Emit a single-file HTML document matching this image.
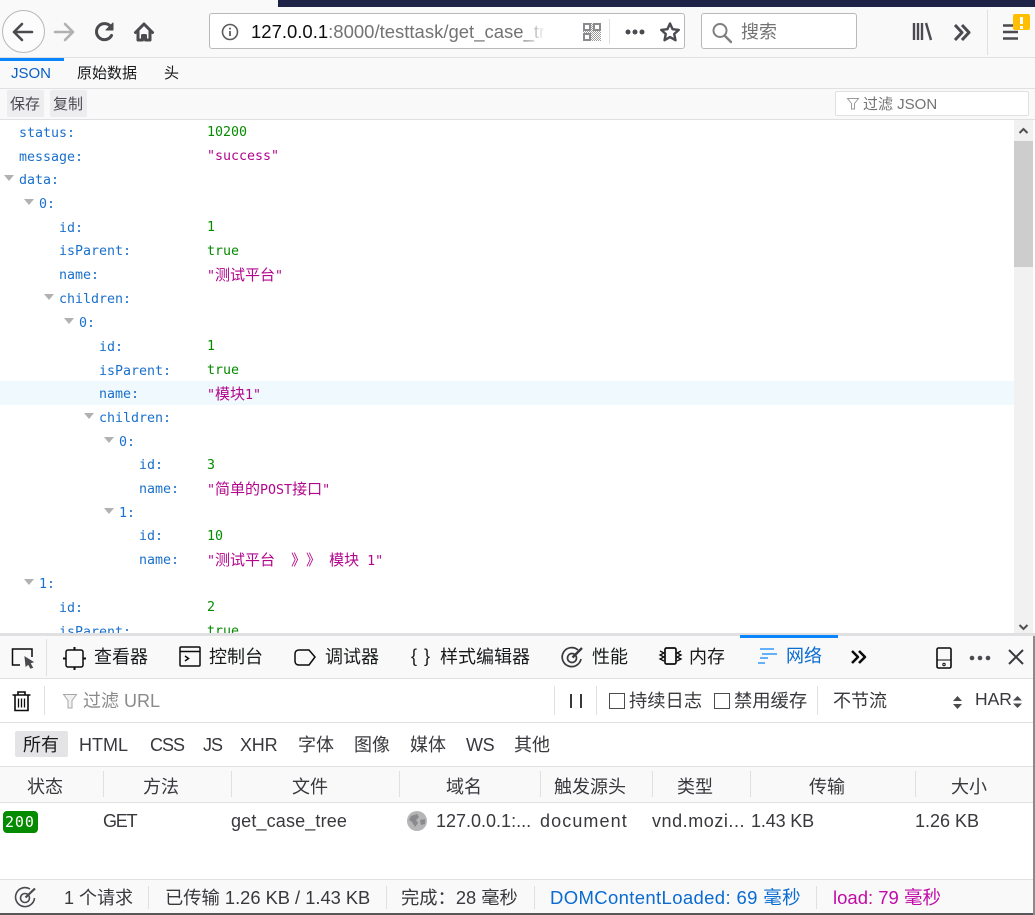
<!DOCTYPE html>
<html lang="zh"><head><meta charset="utf-8"><title>get_case_tree</title>
<style>
html,body{margin:0;padding:0;background:#fff}
body{position:relative;width:1035px;height:915px;overflow:hidden;font-family:"Liberation Sans","Noto Sans CJK SC",sans-serif;color:#18191a}
.b{position:absolute}
.t{position:absolute;white-space:pre;line-height:20px;height:20px}
.m{font-family:"DejaVu Sans Mono","Noto Sans CJK SC",monospace;font-size:13.3px;line-height:20px;margin-top:2px}
.m u{font-size:15px;text-decoration:none}
.m b{display:inline-block;width:15px;font-weight:normal;font-size:15px;text-align:center;font-family:"Noto Sans CJK SC",sans-serif;line-height:20px;height:20px;vertical-align:top}
.k{color:#1a70cc}.n{color:#058b00}.s{color:#b3058c}
.tw{position:absolute;left:0;top:0;width:0;height:0;border-left:5.5px solid transparent;border-right:5.5px solid transparent;border-top:6.5px solid #b1b1b3}
.l{position:absolute;background:#e0e0e2}
svg{position:absolute;overflow:visible}
.f16{font-size:18px;color:#38383d}
.f18{font-size:18px;color:#38383d}
</style></head><body>

<!-- browser chrome -->
<div class="b" style="left:0;top:0;width:1035px;height:57px;background:#f9f9fa"></div>
<div class="b" style="left:278px;top:0;width:757px;height:7px;background:#1f2247"></div>
<div class="l" style="left:0;top:57px;width:1035px;height:1px"></div>

<div class="b" style="left:2px;top:10px;width:41px;height:41px;border:1px solid #b8b8ba;border-radius:50%;background:#fcfcfc"></div>
<svg style="left:0;top:0" width="170" height="57" fill="none" stroke-linecap="round" stroke-linejoin="round">
<path d="M14 32H32M22 24L14 32L22 40" stroke="#4a4a4f" stroke-width="2.6"/>
<path d="M55 32H73M65 24L73 32L65 40" stroke="#b1b1b3" stroke-width="2.6"/>
<path d="M111.5 35.500A8 8 0 1 1 111 27" stroke="#4a4a4f" stroke-width="3"/>
<path d="M113 23V30H106Z" fill="#4a4a4f" stroke="#4a4a4f" stroke-width="1"/>
<path d="M135.500 32.500L144 24L152.500 32.500M138 31V40H142.500V35.500H145.500V40H150V31" stroke="#4a4a4f" stroke-width="3"/>
</svg>

<div class="b" style="left:209px;top:13px;width:476px;height:36px;box-sizing:border-box;border:1px solid #b9b9bb;border-radius:3px;background:#fff"></div>
<svg style="left:221px;top:23px" width="18" height="18" fill="none"><circle cx="9" cy="9" r="7.500" stroke="#5c5c5f" stroke-width="1.600"/><path d="M9 8V13M9 4.800V6.500" stroke="#5c5c5f" stroke-width="1.800"/></svg>
<div class="t" style="left:251px;top:22px;font-size:18.500px;color:#0c0c0d">127.0.0.1<span style="color:#737373">:8000/testtask/get_case_tre</span></div>
<div class="b" style="left:522px;top:15px;width:26px;height:32px;background:linear-gradient(90deg,rgba(255,255,255,0),#fff 90%)"></div>
<div class="b" style="left:548px;top:15px;width:30px;height:32px;background:#fff"></div>
<svg style="left:583px;top:23px" width="18" height="18"><defs><pattern id="q" width="2" height="2" patternUnits="userSpaceOnUse"><rect width="1" height="1" fill="#9a9a9c"/><rect x="1" y="1" width="1" height="1" fill="#9a9a9c"/></pattern></defs><rect width="18" height="18" fill="url(#q)"/><g fill="#fff"><rect x="0" y="0" width="8" height="8"/><rect x="10" y="0" width="8" height="8"/><rect x="0" y="10" width="8" height="8"/></g><g fill="none" stroke="#8b8b8d" stroke-width="2"><rect x="1" y="1" width="6" height="6"/><rect x="11" y="1" width="6" height="6"/><rect x="1" y="11" width="6" height="6"/></g></svg>
<div class="l" style="left:609px;top:19px;width:1px;height:25px"></div>
<svg style="left:625px;top:29px" width="22" height="6" fill="#4a4a4f"><circle cx="3" cy="3" r="2.500"/><circle cx="10" cy="3" r="2.500"/><circle cx="17" cy="3" r="2.500"/></svg>
<svg style="left:659px;top:21px" width="22" height="22" fill="none"><path d="M11 2.500L13.600 8.200L19.800 8.900L15.200 13L16.500 19.200L11 16.100L5.500 19.200L6.800 13L2.200 8.900L8.400 8.200Z" stroke="#4a4a4f" stroke-width="2.400" stroke-linejoin="round"/></svg>

<div class="b" style="left:701px;top:13px;width:156px;height:36px;box-sizing:border-box;border:1px solid #b9b9bb;border-radius:3px;background:#fff"></div>
<svg style="left:711px;top:22px" width="22" height="22" fill="none" stroke="#808083"><circle cx="9" cy="8.500" r="6.500" stroke-width="2"/><path d="M13.500 13.500L20 20" stroke-width="2.400" stroke-linecap="round"/></svg>
<div class="t" style="left:741px;top:22px;font-size:18px;color:#737373">搜索</div>

<svg style="left:905px;top:18px" width="130" height="36" fill="none" stroke="#4a4a4f">
<path d="M9 5V22M13 5V22M17 5V22M21 5L26 22" stroke-width="2.400"/>
<path d="M50 7L57 14.500L50 22M57 7L64 14.500L57 22" stroke-width="3" stroke-linejoin="round"/>
<path d="M98 7.500H110M98 14H113M98 20.500H113" stroke-width="2.400"/>
</svg>
<div class="l" style="left:987px;top:10px;width:1px;height:45px"></div>
<div class="b" style="left:1013px;top:14px;width:17px;height:16px;background:#ffbf00;border-radius:2px"></div>
<div class="b" style="left:1020px;top:17px;width:3px;height:7px;background:#fff"></div>
<div class="b" style="left:1020px;top:26px;width:3px;height:2.500px;background:#fff"></div>

<!-- JSON tabs -->
<div class="b" style="left:0;top:58px;width:1035px;height:61px;background:#f9f9fa"></div>
<div class="b" style="left:0;top:58px;width:64px;height:3px;background:#0a84ff"></div>
<div class="t" style="left:11px;top:64px;font-size:15px;color:#0a5fc4">JSON</div>
<div class="t" style="left:77px;top:64px;font-size:15px;color:#18191a">原始数据</div>
<div class="t" style="left:164px;top:64px;font-size:15px;color:#18191a">头</div>
<div class="l" style="left:0;top:88px;width:1035px;height:1px"></div>
<div class="b" style="left:7px;top:90px;width:37px;height:27px;background:#ededf0;border-radius:2px"></div>
<div class="b" style="left:50px;top:90px;width:37px;height:27px;background:#ededf0;border-radius:2px"></div>
<div class="t" style="left:10px;top:95px;font-size:15px;color:#4a4a4f">保存</div>
<div class="t" style="left:53px;top:95px;font-size:15px;color:#4a4a4f">复制</div>
<div class="b" style="left:835px;top:91px;width:194px;height:25px;box-sizing:border-box;border:1px solid #e0e0e2;border-radius:2px;background:#fff"></div>
<svg style="left:847px;top:98px" width="12" height="12"><path d="M0.500 0.500H11.500L7.500 5.500V11H4.500V5.500Z" fill="#fff" stroke="#9a9a9c"/></svg>
<div class="t" style="left:863px;top:95px;font-size:15px;color:#737373">过滤 JSON</div>
<div class="l" style="left:0;top:119px;width:1035px;height:1px"></div>

<!-- JSON body -->
<div class="b" style="left:0;top:381px;width:1014px;height:24px;background:#f0f9fe"></div>

<div class="t m k" style="left:19px;top:122px">status:</div><div class="t m n" style="left:207px;top:121px">10200</div>
<div class="t m k" style="left:19px;top:146px">message:</div><div class="t m s" style="left:207px;top:145px">"success"</div>
<i class="tw" style="left:4px;top:175px"></i><div class="t m k" style="left:19px;top:169px">data:</div>
<i class="tw" style="left:24px;top:199px"></i><div class="t m k" style="left:39px;top:193px">0:</div>
<div class="t m k" style="left:59px;top:217px">id:</div><div class="t m n" style="left:207px;top:216px">1</div>
<div class="t m k" style="left:59px;top:240px">isParent:</div><div class="t m n" style="left:207px;top:240px">true</div>
<div class="t m k" style="left:59px;top:264px">name:</div><div class="t m s" style="left:207px;top:263px">"<u>测试平台</u>"</div>
<i class="tw" style="left:44px;top:294px"></i><div class="t m k" style="left:59px;top:288px">children:</div>
<i class="tw" style="left:64px;top:318px"></i><div class="t m k" style="left:79px;top:312px">0:</div>
<div class="t m k" style="left:99px;top:336px">id:</div><div class="t m n" style="left:207px;top:335px">1</div>
<div class="t m k" style="left:99px;top:360px">isParent:</div><div class="t m n" style="left:207px;top:359px">true</div>
<div class="t m k" style="left:99px;top:383px">name:</div><div class="t m s" style="left:207px;top:382px">"<u>模块</u>1"</div>
<i class="tw" style="left:84px;top:413px"></i><div class="t m k" style="left:99px;top:407px">children:</div>
<i class="tw" style="left:104px;top:437px"></i><div class="t m k" style="left:119px;top:431px">0:</div>
<div class="t m k" style="left:139px;top:454px">id:</div><div class="t m n" style="left:207px;top:454px">3</div>
<div class="t m k" style="left:139px;top:478px">name:</div><div class="t m s" style="left:207px;top:477px">"<u>简单的</u>POST<u>接口</u>"</div>
<i class="tw" style="left:104px;top:508px"></i><div class="t m k" style="left:119px;top:502px">1:</div>
<div class="t m k" style="left:139px;top:525px">id:</div><div class="t m n" style="left:207px;top:525px">10</div>
<div class="t m k" style="left:139px;top:549px">name:</div><div class="t m s" style="left:207px;top:548px">"<u>测试平台</u>  <b>》</b><b>》</b> <u>模块</u> 1"</div>
<i class="tw" style="left:24px;top:579px"></i><div class="t m k" style="left:39px;top:573px">1:</div>
<div class="t m k" style="left:59px;top:597px">id:</div><div class="t m n" style="left:207px;top:596px">2</div>
<div class="t m k" style="left:59px;top:621px">isParent:</div><div class="t m n" style="left:207px;top:620px">true</div>

<!-- scrollbar -->
<div class="b" style="left:1014px;top:120px;width:19px;height:513px;background:#f1f1f1"></div>
<div class="b" style="left:1014px;top:141px;width:19px;height:126px;background:#cdcdcd"></div>
<svg style="left:1014px;top:120px" width="19" height="513" fill="none" stroke="#505050" stroke-width="2"><path d="M5.500 13L9.500 9L13.500 13"/><path d="M5.500 505L9.500 509L13.500 505"/></svg>

<!-- devtools -->
<div class="b" style="left:0;top:635px;width:1035px;height:280px;background:#fff"></div>
<div class="b" style="left:0;top:633px;width:1035px;height:3px;background:#e0e0e2"></div>
<div class="b" style="left:0;top:636px;width:1035px;height:42px;background:#f9f9fa"></div>
<div class="l" style="left:0;top:678px;width:1035px;height:1px"></div>
<div class="b" style="left:740px;top:635px;width:98px;height:3px;background:#0a84ff"></div>
<div class="l" style="left:46px;top:639px;width:1px;height:37px"></div>

<svg style="left:0;top:636px" width="1035" height="42" fill="none" stroke="#0c0c0d" stroke-width="1.500">
<path d="M20 29H12.500V13H32V21"/><path d="M25 21L33 26L30 27L32.500 31.500L30.500 32L28.500 28L26 30Z" fill="#4a4a4f" stroke="#4a4a4f" stroke-width="1"/>
<rect x="66" y="14" width="17" height="17" rx="2"/><path d="M74.500 11V14M74.500 31V34M63 22.500H66M83 22.500H86" stroke-width="2"/>
<rect x="180" y="11" width="20" height="19" rx="1"/><path d="M180 15.500H200"/><path d="M185 20L188.500 22.500L185 25"/>
<path d="M299 14H309L315 21L309 29H299C296.500 29 295 27.500 295 25V18C295 15.500 296.500 14 299 14Z"/>
<path d="M578 14A9.500 9.500 0 1 0 581 23" stroke="#38383d" stroke-width="1.700"/><circle cx="572" cy="22" r="4.500" stroke="#38383d" stroke-width="1.700"/><path d="M572.500 21.500L582 12" stroke="#38383d" stroke-width="2.400"/>
<rect x="665" y="12" width="11" height="16" rx="1.500" stroke-width="1.700"/><path d="M660 15L664 17L660 19L664 21L660 23L664 25M681 15L677 17L681 19L677 21L681 23L677 25" stroke-width="1.300"/>
<path d="M760 13H774M762 18H777M760 22H768M758 27H765" stroke="#0a84ff" stroke-width="1.300"/>
<path d="M852 15L858 21L852 27M859 15L865 21L859 27" stroke-width="2.500" stroke-linejoin="round"/>
<rect x="937" y="12" width="14" height="20" rx="1.500" stroke-width="1.600"/><path d="M937 24H951" stroke-width="1"/><circle cx="944" cy="28.500" r="1.200" stroke-width="1"/>
<path d="M1009 14L1023 28M1023 14L1009 28" stroke="#38383d" stroke-width="2"/>
</svg>
<svg style="left:969px;top:655px" width="24" height="6" fill="#4a4a4f"><circle cx="3" cy="3" r="2.300"/><circle cx="11" cy="3" r="2.300"/><circle cx="19" cy="3" r="2.300"/></svg>

<div class="t f18" style="left:94px;top:647px;color:#18191a">查看器</div>
<div class="t f18" style="left:209px;top:647px;color:#18191a">控制台</div>
<div class="t f18" style="left:325px;top:647px;color:#18191a">调试器</div>
<div class="t" style="left:411px;top:646px;font-size:18px;letter-spacing:1px;color:#18191a">{ }</div>
<div class="t f18" style="left:440px;top:647px;color:#18191a">样式编辑器</div>
<div class="t f18" style="left:592px;top:647px;color:#18191a">性能</div>
<div class="t f18" style="left:689px;top:647px;color:#18191a">内存</div>
<div class="t f18" style="left:786px;top:646px;color:#0a6bd1">网络</div>

<!-- filter row -->
<svg style="left:12px;top:690px" width="19" height="22" fill="none" stroke="#0c0c0d" stroke-width="1.600"><path d="M0.500 5H18.500M6 5V2H13V5"/><path d="M3 5V20.500H16V5"/><path d="M6.500 8.500V17.500M9.500 8.500V17.500M12.500 8.500V17.500" stroke-width="1.300"/></svg>
<div class="l" style="left:44px;top:686px;width:1px;height:29px"></div>
<svg style="left:63px;top:694px" width="14" height="15"><path d="M0.500 0.500H13.500L9 6.500V14H5V6.500Z" fill="#f1f1f1" stroke="#a8a8aa"/></svg>
<div class="t f16" style="left:83px;top:691px;color:#8a8a8d">过滤 URL</div>
<div class="l" style="left:554px;top:686px;width:1px;height:29px"></div>
<div class="b" style="left:570px;top:694px;width:2px;height:14px;background:#38383d"></div>
<div class="b" style="left:580px;top:694px;width:2px;height:14px;background:#38383d"></div>
<div class="l" style="left:596px;top:686px;width:1px;height:29px"></div>
<div class="b" style="left:609px;top:693px;width:16px;height:16px;box-sizing:border-box;border:1px solid #4a4a4f;background:#fff"></div>
<div class="t f16" style="left:629px;top:691px;font-size:18.300px">持续日志</div>
<div class="b" style="left:714px;top:693px;width:16px;height:16px;box-sizing:border-box;border:1px solid #4a4a4f;background:#fff"></div>
<div class="t f16" style="left:734px;top:691px;font-size:18.300px">禁用缓存</div>
<div class="l" style="left:817px;top:686px;width:1px;height:29px"></div>
<div class="t f16" style="left:833px;top:691px">不节流</div>
<svg style="left:951px;top:695px" width="80" height="15" fill="#4a4a4f"><path d="M2 6L6.500 1L11 6ZM2 9L6.500 14L11 9Z"/><path d="M62 5.500L66.500 1L71 5.500ZM62 8.500L66.500 13L71 8.500Z"/></svg>
<div class="t f16" style="left:975px;top:689px;font-size:17.500px">HAR</div>
<div class="l" style="left:0;top:722px;width:1035px;height:1px"></div>

<!-- type filters -->
<div class="b" style="left:15px;top:731px;width:53px;height:26px;background:#e4e4e6;border-radius:2px"></div>
<div class="t f16" style="left:23px;top:735px;color:#18191a">所有</div>
<div class="t f16" style="left:79px;top:735px">HTML</div>
<div class="t f16" style="left:150px;top:735px;letter-spacing:-1px">CSS</div>
<div class="t f16" style="left:203px;top:735px;letter-spacing:-1px">JS</div>
<div class="t f16" style="left:240px;top:735px;letter-spacing:-.2px">XHR</div>
<div class="t f16" style="left:298px;top:735px">字体</div>
<div class="t f16" style="left:354px;top:735px">图像</div>
<div class="t f16" style="left:410px;top:735px">媒体</div>
<div class="t f16" style="left:466px;top:735px;letter-spacing:-.4px">WS</div>
<div class="t f16" style="left:514px;top:735px">其他</div>
<div class="l" style="left:0;top:766px;width:1035px;height:1px"></div>

<!-- table header -->
<div class="b" style="left:0;top:767px;width:1035px;height:35px;background:#f9f9fa"></div>
<div class="l" style="left:0;top:802px;width:1035px;height:1px"></div>
<div class="l" style="left:103px;top:771px;width:1px;height:26px"></div>
<div class="l" style="left:231px;top:771px;width:1px;height:26px"></div>
<div class="l" style="left:399px;top:771px;width:1px;height:26px"></div>
<div class="l" style="left:540px;top:771px;width:1px;height:26px"></div>
<div class="l" style="left:652px;top:771px;width:1px;height:26px"></div>
<div class="l" style="left:750px;top:771px;width:1px;height:26px"></div>
<div class="l" style="left:915px;top:771px;width:1px;height:26px"></div>
<div class="t f16" style="left:27px;top:777px">状态</div>
<div class="t f16" style="left:143px;top:777px">方法</div>
<div class="t f16" style="left:292px;top:777px">文件</div>
<div class="t f16" style="left:446px;top:777px">域名</div>
<div class="t f16" style="left:554px;top:777px">触发源头</div>
<div class="t f16" style="left:677px;top:777px">类型</div>
<div class="t f16" style="left:809px;top:777px">传输</div>
<div class="t f16" style="left:951px;top:777px">大小</div>

<!-- row -->
<div class="b" style="left:3px;top:811px;width:35px;height:22px;background:#058b00;border-radius:4px"></div>
<div class="t m" style="left:5px;top:812px;margin-top:0;color:#fff;font-size:15px;letter-spacing:.9px">200</div>
<div class="t f16" style="left:103px;top:811px;letter-spacing:-1.200px">GET</div>
<div class="t f16" style="left:231px;top:811px;letter-spacing:.15px">get_case_tree</div>
<svg style="left:406px;top:810px" width="22" height="22"><circle cx="11" cy="11" r="10" fill="#b5b5b7"/><path d="M5 6L11 4L13 7L10 10L12 13L9 17L6 12L3 10ZM14 10L19 9L19 14L15 15Z" fill="#8a8a8c"/></svg>
<div class="t f16" style="left:436px;top:811px">127.0.0.1:...</div>
<div class="t f16" style="left:540px;top:811px;letter-spacing:1.100px">document</div>
<div class="t f16" style="left:652px;top:811px;letter-spacing:.55px">vnd.mozi...</div>
<div class="t f16" style="left:751px;top:811px;letter-spacing:-.15px">1.43 KB</div>
<div class="t f16" style="left:915px;top:811px">1.26 KB</div>

<!-- footer -->
<div class="b" style="left:0;top:880px;width:1035px;height:33px;background:#f9f9fa"></div>
<div class="l" style="left:0;top:879px;width:1035px;height:1px"></div>
<div class="b" style="left:0;top:913px;width:1035px;height:2px;background:#58585a"></div>
<svg style="left:14px;top:886px" width="23" height="23" fill="none" stroke="#4a4a4f" stroke-width="1.600"><path d="M16 3A9.500 9.500 0 1 0 20.500 12"/><circle cx="11" cy="12" r="4.500"/><path d="M11.500 11.500L21 2.500" stroke-width="2.200"/></svg>
<div class="t f16" style="left:64px;top:888px">1 个请求</div>
<div class="l" style="left:148px;top:886px;width:1px;height:23px"></div>
<div class="t f16" style="left:165px;top:888px;font-size:18.300px">已传输 1.26 KB / 1.43 KB</div>
<div class="l" style="left:386px;top:886px;width:1px;height:23px"></div>
<div class="t f16" style="left:401px;top:888px;font-size:18.300px">完成：28 毫秒</div>
<div class="l" style="left:534px;top:886px;width:1px;height:23px"></div>
<div class="t" style="left:550px;top:888px;font-size:18.500px;letter-spacing:.36px;color:#0a6bd1">DOMContentLoaded: 69 毫秒</div>
<div class="l" style="left:816px;top:886px;width:1px;height:23px"></div>
<div class="t" style="left:833px;top:888px;font-size:18.500px;color:#c10ba6">load: 79 毫秒</div>
<div class="b" style="left:1033px;top:636px;width:2px;height:279px;background:#8a8a8c"></div>
</body></html>
